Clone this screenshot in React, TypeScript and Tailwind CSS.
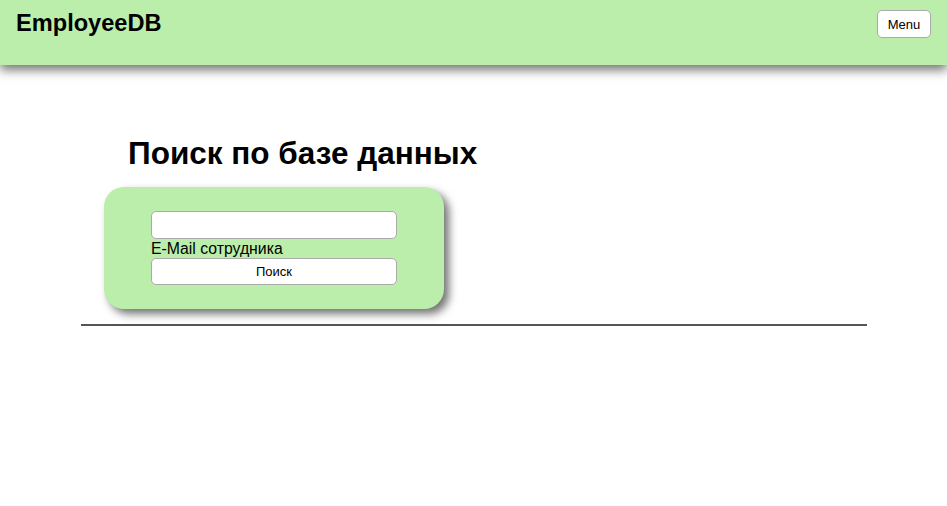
import React from "react";

export default function App() {
  return (
    <div className="min-h-[506px] bg-white text-black" style={{ fontFamily: '"Liberation Sans", Arial, sans-serif' }}>
      <header className="h-[65px] bg-[#bbeeaa] flex justify-between items-start px-4 shadow-[0_5px_10px_rgba(0,0,0,0.55)] relative">
        <div className="pt-[9px] text-[23.6px] font-bold leading-[28px]">EmployeeDB</div>
        <button className="mt-[10px] h-[28px] w-[54px] rounded-[5px] border border-[#aaaaaa] bg-white text-[13px] leading-none">Menu</button>
      </header>
      <main className="pl-[81px] pr-[80px]">
        <h1 className="ml-[47px] mt-[70px] text-[31.5px] font-bold leading-[37px]">Поиск по базе данных</h1>
        <div className="ml-[23px] mt-[15px] w-[340px] rounded-[20px] bg-[#bbeeaa] px-[47px] pt-[24px] pb-[24px] shadow-[5px_5px_8px_rgba(0,0,0,0.55)]">
          <input className="block h-[28px] w-[246px] rounded-[5px] border border-[#aaaaaa] bg-white" />
          <label className="block text-[15.8px] leading-[19px]">E-Mail сотрудника</label>
          <button className="block h-[27px] w-[246px] rounded-[5px] border border-[#aaaaaa] bg-white text-[13px]">Поиск</button>
        </div>
        <hr className="mt-[15px] border-0 border-t-2 border-[#555555]" />
      </main>
    </div>
  );
}
